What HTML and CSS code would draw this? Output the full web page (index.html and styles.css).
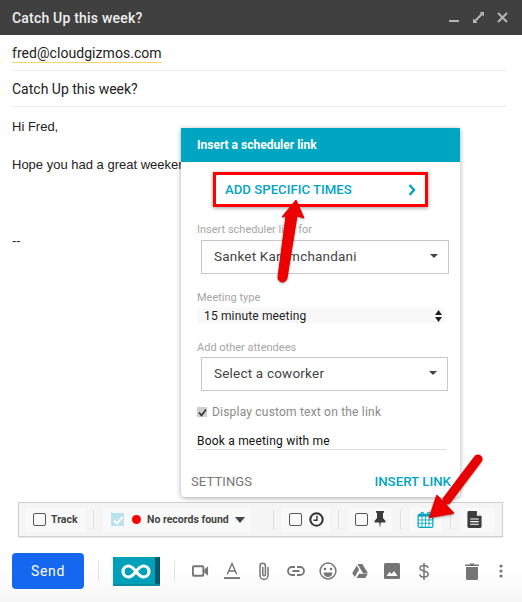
FILE: index.html
```html
<!DOCTYPE html>
<html lang="en">
<head>
<meta charset="utf-8">
<title>Catch Up this week?</title>
<link rel="stylesheet" href="styles.css">
</head>
<body>
<div class="compose">
  <header class="titlebar">
    <span class="title">Catch Up this week?</span>
    <div class="winctl">
      <svg width="11" height="11" viewBox="0 0 11 11"><rect x="0" y="8" width="10" height="2" fill="#b5b5b5"/></svg>
      <svg width="11" height="11" viewBox="0 0 11 11"><path d="M0 11V6.500L1.600 8 8 1.600 6.500 0H11V4.500L9.400 3 3 9.400 4.500 11Z" fill="#b5b5b5"/></svg>
      <svg width="11" height="11" viewBox="0 0 11 11"><path d="M1 1 10 10M10 1 1 10" stroke="#b5b5b5" stroke-width="2" fill="none"/></svg>
    </div>
  </header>
  <div class="field"><span class="recipient">fred@cloudgizmos.com</span></div>
  <div class="field subject">Catch Up this week?</div>
  <div class="body">
    <p class="hi">Hi Fred,</p>
    <p class="hope">Hope you had a great weekend!</p>
    <p class="sig">--</p>
  </div>
  <div class="tracker">
    <div class="tgroup track"><span class="cb"></span><b>Track</b></div>
    <div class="tsep"></div>
    <div class="tgroup records">
      <span class="cb-light"><svg width="12" height="12" viewBox="0 0 12 12"><path d="M2 6.500 5 9.500 10.500 3" stroke="#fff" stroke-width="2" fill="none"/></svg></span>
      <span class="dot"></span><b>No records found</b>
      <svg width="11" height="6" viewBox="0 0 11 6"><path d="M0 0H10L5 6Z" fill="#444"/></svg>
    </div>
    <div class="tsep sep-a"></div>
    <div class="tgroup clock"><span class="cb"></span>
      <svg width="15" height="15" viewBox="0 0 16 16"><circle cx="8" cy="8" r="6.600" fill="none" stroke="#333" stroke-width="2.200"/><path d="M8.500 4V8.800H4.800" fill="none" stroke="#333" stroke-width="1.500"/></svg>
    </div>
    <div class="tsep"></div>
    <div class="tgroup pin"><span class="cb"></span>
      <svg width="12" height="17" viewBox="0 0 12 17"><path d="M2 0H10V1.500L9 2V7L11.500 10V11.500H6.800L6 17 5.200 11.500H.5V10L3 7V2L2 1.500Z" fill="#3c3c3c"/></svg>
    </div>
    <div class="tsep"></div>
    <div class="tgroup cal">
      <svg width="17" height="17" viewBox="0 0 17 18"><rect x=".7" y="3.500" width="15.600" height="13.800" rx="1.500" fill="#fff" stroke="#00a5c2" stroke-width="1.300"/><rect x="1" y="3.500" width="15" height="2.500" fill="#00a5c2"/><path d="M1 9.500H16M1 13H16M4.800 6V17M8.500 6V17M12.200 6V17" stroke="#00a5c2" stroke-width=".9"/><path d="M3.500 4C3.500 .5 6.500 .5 6.500 4M10.500 4C10.500 .5 13.500 .5 13.500 4" stroke="#00a5c2" stroke-width="1.200" fill="none"/></svg>
    </div>
    <div class="tsep"></div>
    <div class="tgroup doc">
      <svg width="15" height="17" viewBox="0 0 15 18"><path d="M0 1.500A1.500 1.500 0 0 1 1.500 0H9.500L15 5.500V16.500A1.500 1.500 0 0 1 13.500 18H1.500A1.500 1.500 0 0 1 0 16.500Z" fill="#3c3c3c"/><path d="M10 .5V5H14.500Z" fill="#fff"/><path d="M3 8.500H12M3 11.200H12M3 14H12" stroke="#fff" stroke-width="1.200"/></svg>
    </div>
  </div>
  <footer class="actions">
    <div class="actions-row">
      <button class="send">Send</button>
      <div class="asep"></div>
      <div class="logo">
        <svg width="30" height="15" viewBox="0 0 30 15"><path d="M15 7.500C12 3.500 10 2 7.500 2A5.500 5.500 0 0 0 7.500 13C10 13 12 11.500 15 7.500C18 3.500 20 2 22.500 2A5.500 5.500 0 0 1 22.500 13C20 13 18 11.500 15 7.500Z" fill="none" stroke="#fff" stroke-width="3.200"/></svg>
      </div>
      <div class="asep asep-last"></div>
      <span class="ai"><svg width="17" height="12" viewBox="0 0 18 12"><rect x="1" y="1" width="11" height="10" rx="1" fill="none" stroke="#757575" stroke-width="2"/><path d="M13 4.500 17 1V11L13 7.500Z" fill="#757575"/></svg></span>
      <span class="ai"><svg width="16" height="18" viewBox="0 0 17 18"><path d="M3.500 12.500 8.500 1 13.500 12.500M5.200 9H11.800" fill="none" stroke="#757575" stroke-width="1.500"/><rect x="0" y="15.500" width="17" height="2" fill="#757575"/></svg></span>
      <span class="ai"><svg width="12" height="19" viewBox="0 0 12 19"><path d="M10 5V13.500A4 4 0 0 1 2 13.500V4A2.700 2.700 0 0 1 7.400 4V12.500A1.300 1.300 0 0 1 4.800 12.500V5" fill="none" stroke="#757575" stroke-width="1.500"/></svg></span>
      <span class="ai"><svg width="18" height="10" viewBox="0 0 18 10"><path d="M8 1H5A4 4 0 0 0 5 9H8M10 1H13A4 4 0 0 1 13 9H10M5.500 5H12.500" fill="none" stroke="#757575" stroke-width="1.800"/></svg></span>
      <span class="ai"><svg width="18" height="18" viewBox="0 0 18 18"><circle cx="9" cy="9" r="7.900" fill="none" stroke="#757575" stroke-width="1.500"/><circle cx="6" cy="7" r="1.300" fill="#757575"/><circle cx="12" cy="7" r="1.300" fill="#757575"/><path d="M4.500 10.500H13.500A4.500 4.500 0 0 1 4.500 10.500Z" fill="#757575"/></svg></span>
      <span class="ai"><svg width="16" height="14" viewBox="0 0 17 15"><path d="M5.800 0H11L17 10H11.800ZM5 1.500 7.500 6 3 14 .2 9.800ZM7.500 10.500H16.800L14.200 15H4.800Z" fill="#757575"/></svg></span>
      <span class="ai"><svg width="16" height="16" viewBox="0 0 16 16"><path d="M1.500 0H14.500A1.500 1.500 0 0 1 16 1.500V14.500A1.500 1.500 0 0 1 14.500 16H1.500A1.500 1.500 0 0 1 0 14.500V1.500A1.500 1.500 0 0 1 1.500 0ZM2.500 13H13.500L10 8 7.500 11 5.500 9Z" fill="#757575" fill-rule="evenodd"/></svg></span>
      <span class="ai"><svg width="10" height="17" viewBox="0 0 10 17"><path d="M9 4.800C8.800 3.200 7.300 2.500 5 2.500 2.700 2.500 1 3.400 1 5 1 6.700 2.800 7.500 5 8 7.400 8.600 9.200 9.300 9.200 11.300 9.200 13 7.400 14 5 14 2.600 14 1 13 .800 11.300M5 0V17" fill="none" stroke="#757575" stroke-width="1.500"/></svg></span>
      <span class="ai ai-trash"><svg width="14" height="17" viewBox="0 0 14 17"><path d="M1 4H13V15.500A1.500 1.500 0 0 1 11.500 17H2.500A1.500 1.500 0 0 1 1 15.500ZM0 1.500H4.500L5 .5H9L9.500 1.500H14V3H0Z" fill="#757575"/></svg></span>
      <span class="ai ai-dots"><svg width="4" height="14" viewBox="0 0 4 14"><circle cx="2" cy="2" r="1.600" fill="#757575"/><circle cx="2" cy="7" r="1.600" fill="#757575"/><circle cx="2" cy="12" r="1.600" fill="#757575"/></svg></span>
    </div>
  </footer>
</div>

<section class="popup">
  <div class="pop-head">Insert a scheduler link</div>
  <div class="pop-body">
    <div class="specific"><span>ADD SPECIFIC TIMES</span>
      <svg width="8" height="12" viewBox="0 0 8 12"><path d="M1.500 1 6 6 1.500 11" fill="none" stroke="#00a5c2" stroke-width="2.400"/></svg>
    </div>
    <label class="lab first">Insert scheduler link for</label>
    <div class="sel"><span>Sanket Karamchandani</span><i class="caret"></i></div>
    <label class="lab type">Meeting type</label>
    <div class="native"><span>15 minute meeting</span>
      <svg width="7" height="12" viewBox="0 0 7 12"><path d="M3.500 0 7 5H0ZM0 7H7L3.500 12Z" fill="#222"/></svg>
    </div>
    <label class="lab other">Add other attendees</label>
    <div class="sel narrow"><span>Select a coworker</span><i class="caret"></i></div>
    <div class="custom"><span class="mini"><svg width="9" height="9" viewBox="0 0 9 9"><path d="M1 4.500 3.500 7.500 8 1.500" stroke="#333" stroke-width="1.700" fill="none"/></svg></span>Display custom text on the link</div>
    <div class="linktext">Book a meeting with me</div>
  </div>
  <div class="pop-foot"><span class="settings">SETTINGS</span><span class="insert">INSERT LINK</span></div>
</section>

<svg class="arrow arrow-up" width="35" height="95" viewBox="0 0 35 95"><path d="M21 4 29 22 22 20 12 82A4.500 4.500 0 0 1 3 81L11 20 7 21Z" fill="#ee0000" stroke="#e00000" stroke-width="1" stroke-linejoin="round"/></svg>
<svg class="arrow arrow-down" width="70" height="75" viewBox="0 0 70 75"><path d="M58 9 27 50" stroke="#e60000" stroke-width="9" stroke-linecap="round" fill="none"/><path d="M10 67 17 46 33 63Z" fill="#f00000" stroke="#e60000" stroke-width="2" stroke-linejoin="round"/></svg>
</body>
</html>
```
FILE: styles.css
```css
* { box-sizing: border-box; }
html, body { margin: 0; padding: 0; }
body { width: 522px; height: 602px; overflow: hidden; background: #fff; font-family: Roboto, "Liberation Sans", sans-serif; position: relative; color: #222; }
.compose { display: flex; flex-direction: column; height: 602px; background: linear-gradient(#fff 570px, #f6f6f6 602px); }
.titlebar { height: 35px; flex: none; background: #404040; color: #eee; display: flex; align-items: center; justify-content: space-between; padding: 0 14px 0 12px; }
.title { font-size: 14px; font-weight: 500; letter-spacing: .2px; }
.winctl { display: flex; gap: 13px; }
.field { margin: 0 16px 0 12px; height: 36px; border-bottom: 1px solid #ececec; font-size: 14px; line-height: 36px; }
.recipient { display: inline-block; line-height: 18px; border-bottom: 1px solid #fbd468; letter-spacing: .05px; }
.subject { line-height: 37px; }
.body { height: 395px; flex: none; padding: 0 12px; font-family: "Liberation Sans", Arial, sans-serif; font-size: 13px; line-height: 16px; color: #222; }
.body p { margin: 0; }
.hi { padding-top: 12px; }
.hope { padding-top: 22px; }
.sig { padding-top: 60px; }
.tracker { flex: none; margin: 0 19px 0 18px; height: 35px; background: #f5f5f5; border: 1px solid #cfcfcf; box-shadow: 0 1px 1px rgba(0,0,0,.08); display: flex; align-items: center; padding: 0 0 0 6px; }
.tgroup { height: 24px; background: #f9f9f9; display: flex; align-items: center; font-size: 10.500px; color: #444; white-space: nowrap; flex: none; }
.tgroup b { font-weight: 700; }
.tsep { width: 1px; height: 19px; background: #e0e0e0; margin: 0 9px 0 8px; flex: none; }
.sep-a { margin: 0 7px 0 22px; }
.cb { width: 13px; height: 13px; border: 1px solid #555; border-radius: 2px; background: #fafafa; flex: none; }
.track { width: 60px; padding-left: 8px; gap: 5px; }
.records { width: 148px; padding-left: 8px; gap: 8px; }
.records svg { flex: none; }
.records > svg { margin-left: -2px; }
.cb-light { width: 13px; height: 13px; background: #b8e3ed; display: flex; align-items: center; justify-content: center; flex: none; }
.dot { width: 9px; height: 9px; border-radius: 50%; background: #f00; flex: none; margin-right: -2px; }
.clock { width: 49px; padding-left: 8px; gap: 7px; }
.pin { width: 44px; padding-left: 7px; gap: 6px; }
.cal { width: 32px; justify-content: center; padding-right: 2px; }
.doc { width: 35px; justify-content: center; padding-right: 6px; }
.actions { flex: none; padding: 16px 0 0 12px; height: 65px; }
.actions-row { display: flex; align-items: center; height: 36px; }
.send { width: 72px; height: 36px; border: 0; border-radius: 4px; background: #1467ee; color: #fff; font-family: Roboto, sans-serif; font-size: 14px; font-weight: 400; letter-spacing: .7px; padding: 0; flex: none; }
.asep { width: 1px; height: 20px; background: #e3e3e3; flex: none; margin: 0 14px; }
.asep-last { margin-right: 9px; }
.logo { width: 47px; height: 29px; flex: none; background: linear-gradient(90deg, #00a0b8 42px, #005a6c 42px); display: flex; align-items: center; padding-left: 8px; box-shadow: inset 0 -2px 0 #0b8da3; }
.ai { width: 32px; height: 24px; flex: none; display: flex; align-items: center; justify-content: center; }
.ai-trash { margin-left: 16px; }
.ai-dots { width: 25px; }
.popup { position: absolute; left: 181px; top: 128px; width: 279px; height: 369px; background: #fff; box-shadow: 0 1px 5px rgba(0,0,0,.35); border-radius: 0 0 4px 4px; display: flex; flex-direction: column; }
.pop-head { height: 34px; flex: none; background: #00a5c2; color: #fff; font-size: 12px; font-weight: 700; line-height: 34px; padding-left: 16px; }
.pop-body { padding: 0 12px 0 16px; flex: 1; }
.specific { margin: 10px 0 0 16px; width: 215px; height: 35px; border: 3px solid #f00; box-shadow: 0 1px 4px rgba(0,0,0,.4); display: flex; align-items: center; justify-content: space-between; padding: 0 9px 0 9px; color: #00a5c2; font-size: 13.200px; font-weight: 500; }
.lab { display: block; font-size: 11px; line-height: 14px; color: #a6a6a6; }
.first { margin-top: 16px; }
.sel { margin: 3px 0 0 4px; width: 248px; height: 34px; border: 1px solid #c8c8c8; display: flex; align-items: center; justify-content: space-between; padding: 0 10px 2px 12px; font-size: 13.500px; letter-spacing: .2px; color: #444; }
.narrow { width: 247px; }
.caret { width: 0; height: 0; border: 4px solid transparent; border-top: 4px solid #444; border-bottom: 0; }
.type { margin-top: 17px; }
.native { margin-top: 3px; width: 248px; height: 15px; background: #f8f8f8; border-radius: 4px; display: flex; align-items: center; justify-content: space-between; padding: 0 3px 0 7px; font-size: 12px; letter-spacing: .15px; color: #222; }
.other { margin-top: 18px; }
.other + .sel { margin-top: 2px; }
.custom { margin-top: 13px; display: flex; align-items: center; gap: 4px; font-size: 12px; letter-spacing: .2px; color: #8a8a8a; height: 16px; }
.mini { width: 10px; height: 10px; background: #cfcfcf; border-radius: 1px; display: flex; align-items: center; justify-content: center; margin-right: 1px; }
.linktext { margin-top: 12px; width: 249px; height: 18px; border-bottom: 1px solid #ddd; font-size: 12px; letter-spacing: .2px; color: #111; line-height: 18px; }
.pop-foot { flex: none; height: 38px; display: flex; align-items: baseline; justify-content: space-between; padding: 15px 9px 0 10px; font-size: 13px; }
.settings { color: #777; letter-spacing: .1px; }
.insert { color: #00a5c2; font-weight: 500; font-size: 13.300px; }
.arrow { position: absolute; filter: drop-shadow(0 1px 1px rgba(0,0,0,.35)); overflow: visible; }
.arrow-up { left: 275px; top: 196px; }
.arrow-down { left: 420px; top: 450px; }
```
